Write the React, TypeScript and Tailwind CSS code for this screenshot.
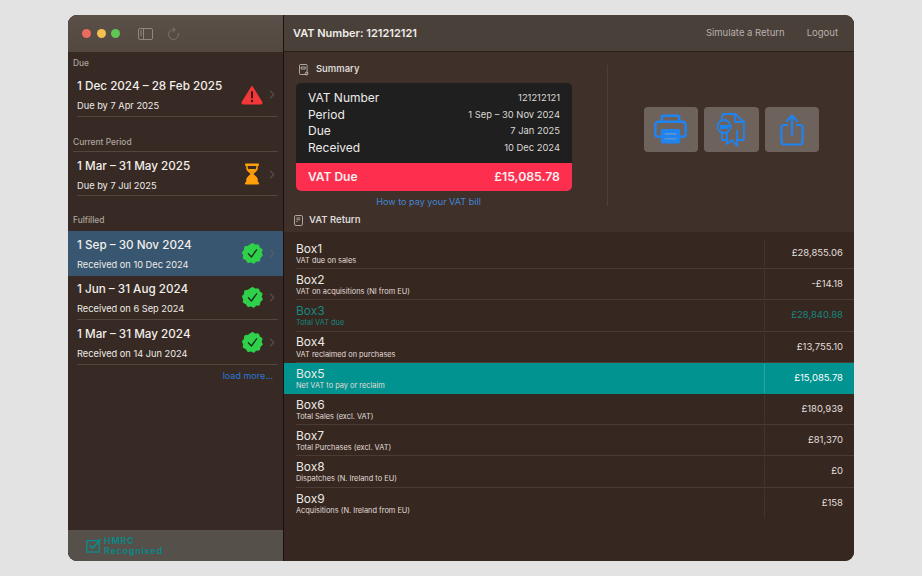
import React from "react";

const font = { fontFamily: 'Inter, "Liberation Sans", sans-serif' };

function Alert() {
  return (
    <svg width="22" height="20" viewBox="0 0 22 20" className="shrink-0">
      <path d="M11 1.2 L21 17.2 Q21.6 19 19.8 19 H2.2 Q0.4 19 1 17.2 Z" fill="#f4383a" stroke="#f4383a" strokeLinejoin="round" />
      <rect x="10" y="6" width="2" height="7.5" rx="1" fill="#3a1512" />
      <circle cx="11" cy="16" r="1.2" fill="#3a1512" />
    </svg>
  );
}

function Hourglass() {
  return (
    <svg width="16" height="22" viewBox="0 0 16 22" className="shrink-0">
      <rect x="1" y="0.5" width="14" height="2.6" rx="1" fill="#ff9f0a" />
      <rect x="1" y="19" width="14" height="2.6" rx="1" fill="#ff9f0a" />
      <path d="M2.2 3 V5.5 Q2.2 7.5 6.6 11 Q2.2 14.5 2.2 16.5 V19 H13.8 V16.5 Q13.8 14.5 9.4 11 Q13.8 7.5 13.8 5.5 V3 H12.2 V5 Q12 6 8 9.4 Q4 6 3.8 5 V3 Z" fill="#ff9f0a" />
      <path d="M3.4 19 Q3.8 15.5 8 12.4 Q12.2 15.5 12.6 19 Z M4.6 6 H11.4 Q10 8 8 9.6 Q6 8 4.6 6 Z" fill="#ff9f0a" />
    </svg>
  );
}

function Badge() {
  return (
    <svg width="21" height="21" viewBox="0 0 21 21" className="shrink-0">
      <path
        d="M10.5 0.3 L13.2 2 L16.4 1.9 L17.6 4.8 L20.2 6.6 L19.2 9.7 L20.4 12.6 L18 14.8 L17.4 18 L14.2 18.2 L11.8 20.4 L9 18.9 L5.8 19.6 L4.2 16.8 L1.2 15.4 L1.6 12.2 L0.2 9.4 L2.4 7 L2.8 3.8 L6 3.2 Z"
        fill="#2fd14a"
        stroke="#2fd14a"
        strokeLinejoin="round"
      />
      <path d="M6.4 10.8 L9.4 14 L14.6 6.8" fill="none" stroke="#1d2b1f" strokeWidth="1.3" strokeLinecap="round" strokeLinejoin="round" />
    </svg>
  );
}

function Chevron() {
  return (
    <svg width="6" height="9" viewBox="0 0 6 9" className="shrink-0">
      <path d="M1.5 1 L4.8 4.5 L1.5 8" fill="none" stroke="#6f655f" strokeWidth="1" strokeLinecap="round" strokeLinejoin="round" />
    </svg>
  );
}

function PeriodRow({
  title,
  sub,
  icon,
  selected,
  tight,
  divider = true,
}: {
  title: string;
  sub: string;
  icon: React.ReactNode;
  selected?: boolean;
  tight?: boolean;
  divider?: boolean;
}) {
  return (
    <div className={`flex flex-col pl-[9px] ${selected ? "bg-[#38566f]" : ""}`}>
      <div className={`flex h-[44.5px] items-center ${divider ? "border-b border-[#52463f]" : ""} ${selected ? "pr-[8px]" : "mr-[5px] pr-[3px]"}`}>
        <div className={`flex min-w-0 flex-1 flex-col ${tight ? "pt-[1px]" : "pt-[3px]"}`}>
          <div className="text-[11.7px] font-medium leading-[16px] text-[#f2efec]">{title}</div>
          <div className="mt-[5px] text-[9.25px] leading-[13px] text-[#efebe7]">{sub}</div>
        </div>
        <div className={`flex w-[22px] justify-center ${tight ? "" : "pt-[2px]"}`}>{icon}</div>
        <div className={`ml-[6px] flex ${tight ? "" : "pt-[2px]"}`}><Chevron /></div>
      </div>
    </div>
  );
}

function SectionLabel({ children, className = "" }: { children: React.ReactNode; className?: string }) {
  return <div className={`pl-[5px] text-[8.4px] font-medium leading-[11px] text-[#ada59f] ${className}`}>{children}</div>;
}

function InfoRow({ k, v }: { k: string; v: string }) {
  return (
    <div className="flex h-[16.6px] items-center justify-between">
      <span className="text-[12px] text-[#eeebe8]">{k}</span>
      <span className="text-[9.4px] text-[#dcd8d5]">{v}</span>
    </div>
  );
}

function BoxRow({
  name,
  desc,
  value,
  state,
  last,
}: {
  name: string;
  desc: string;
  value: string;
  state?: "teal" | "active";
  last?: boolean;
}) {
  const active = state === "active";
  const teal = state === "teal";
  return (
    <div className={`flex h-[31.2px] pl-[12px] ${active ? "bg-[#009390]" : ""}`}>
      <div className={`flex min-w-0 flex-1 pr-[11px] ${!active && !last ? "border-b border-[#483c35]" : ""}`}>
        <div className="flex flex-1 flex-col justify-center pt-[0.5px]">
          <div className={`text-[12px] leading-[15px] ${teal ? "text-[#14877f]" : "text-[#ece8e5]"}`}>{name}</div>
          <div className={`mt-[0.5px] text-[7.4px] leading-[10px] ${teal ? "text-[#14877f]" : "text-[#e2ddd9]"}`}>{desc}</div>
        </div>
        <div className={`my-[1px] flex w-[79px] items-center justify-end border-l ${active ? "border-[#2aa5a2]" : "border-[#41352e]"}`}>
          <span className={`text-[9.5px] ${teal ? "text-[#14877f]" : active ? "text-white" : "text-[#e3dfdb]"}`}>{value}</span>
        </div>
      </div>
    </div>
  );
}

function ActionButton({ children }: { children: React.ReactNode }) {
  return <div className="flex h-[45px] w-[54.5px] items-center justify-center rounded-[4px] bg-[#6e625c]">{children}</div>;
}

export default function App() {
  return (
    <div className="min-h-[576px] bg-[#e3e3e3] pl-[68px] pt-[15px]" style={font}>
      <div className="flex h-[546px] w-[786px] overflow-hidden rounded-[9px] bg-[#362821]">
        {/* Sidebar */}
        <aside className="flex w-[215px] shrink-0 flex-col bg-[#372a24]">
          <div className="flex h-[37px] shrink-0 items-center bg-gradient-to-b from-[#5a5049] to-[#524840] pl-[14px]">
            <span className="h-[9px] w-[9px] rounded-full bg-[#ed6a5e]" />
            <span className="ml-[5.5px] h-[9px] w-[9px] rounded-full bg-[#f4bf4f]" />
            <span className="ml-[5.5px] h-[9px] w-[9px] rounded-full bg-[#61c554]" />
            <svg width="15" height="12" viewBox="0 0 15 12" className="ml-[18px]" fill="none" stroke="#8f8882">
              <rect x="0.5" y="0.5" width="14" height="11" rx="1.5" />
              <path d="M5.5 0.5 V11.5" />
              <path d="M2 3 H4 M2 5 H4 M2 7 H4" />
            </svg>
            <svg width="13" height="14" viewBox="0 0 13 14" className="ml-[14px]" fill="none" stroke="#7a726c" strokeLinecap="round" strokeLinejoin="round">
              <path d="M7.6 2.6 A5 5 0 1 0 11.4 6.4" />
              <path d="M6 0.6 L8.2 2.6 L6.4 4.8" />
            </svg>
          </div>
          <div className="flex min-h-0 flex-1 flex-col">
            <SectionLabel className="mt-[6px]">Due</SectionLabel>
            <div className="mt-[3px]">
              <PeriodRow title="1 Dec 2024 – 28 Feb 2025" sub="Due by 7 Apr 2025" icon={<Alert />} />
            </div>
            <SectionLabel className="mt-[20px]">Current Period</SectionLabel>
            <div className="mx-[5px] mt-[3px] border-t border-[#52463f]" />
            <PeriodRow title="1 Mar – 31 May 2025" sub="Due by 7 Jul 2025" icon={<Hourglass />} />
            <SectionLabel className="mt-[19px]">Fulfilled</SectionLabel>
            <div className="mt-[5px]">
              <PeriodRow title="1 Sep – 30 Nov 2024" sub="Received on 10 Dec 2024" icon={<Badge />} selected tight divider={false} />
              <PeriodRow title="1 Jun – 31 Aug 2024" sub="Received on 6 Sep 2024" icon={<Badge />} tight />
              <PeriodRow title="1 Mar – 31 May 2024" sub="Received on 14 Jun 2024" icon={<Badge />} />
            </div>
            <div className="mt-[5.5px] pr-[10px] text-right text-[9px] leading-[11px] text-[#2a78d8]">load more...</div>
          </div>
          <div className="flex h-[31px] shrink-0 items-center bg-[#56504a] pl-[18px]">
            <svg width="16" height="15" viewBox="0 0 16 15" fill="none" stroke="#0e8a88">
              <rect x="0.8" y="2.6" width="12.4" height="11.4" strokeWidth="1.4" />
              <path d="M3.4 7.2 L6.6 10.4 L14.4 1" strokeWidth="1.8" />
            </svg>
            <div className="ml-[2px] text-[9px] font-bold leading-[10px] tracking-[0.7px] text-[#0e8585]">
              <div>HMRC</div>
              <div>Recognised</div>
            </div>
          </div>
        </aside>
        <div className="w-px shrink-0 bg-[#191210]" />
        {/* Main */}
        <main className="flex min-w-0 flex-1 flex-col">
          <header className="flex h-[37px] shrink-0 items-center justify-between border-b border-[#2a201b] bg-[#4a403a] pl-[9px] pr-[16px] pt-[1px]">
            <div className="text-[11px] font-semibold text-[#f0ede9]">VAT Number: 121212121</div>
            <div className="flex gap-[22px] text-[9.5px] text-[#b8b1ab]">
              <span>Simulate a Return</span>
              <span>Logout</span>
            </div>
          </header>
          <section className="flex h-[180px] shrink-0 flex-col bg-[#3f302a]">
            <div className="flex min-h-0 flex-1">
              <div className="w-[323px] shrink-0 pl-[12px]">
                <div className="flex h-[31px] items-center pl-[3px] pt-[4px]">
                  <svg width="10" height="12" viewBox="0 0 10 12" fill="none" stroke="#c9c4bf" strokeWidth="0.8">
                    <rect x="0.5" y="0.5" width="7.6" height="10" rx="1" />
                    <path d="M2.2 3 H6.2 V5 H2.2 Z" />
                    <circle cx="7.6" cy="9.6" r="1.4" />
                  </svg>
                  <span className="ml-[7px] text-[9.4px] font-semibold text-[#dcd8d4]">Summary</span>
                </div>
                <div className="w-[276px] overflow-hidden rounded-[5px] bg-[#1f1f1f]">
                  <div className="px-[12px] pb-[6.6px] pt-[7px]">
                    <InfoRow k="VAT Number" v="121212121" />
                    <InfoRow k="Period" v="1 Sep – 30 Nov 2024" />
                    <InfoRow k="Due" v="7 Jan 2025" />
                    <InfoRow k="Received" v="10 Dec 2024" />
                  </div>
                  <div className="flex h-[28px] items-center justify-between bg-[#fe2e4f] px-[12px] font-semibold text-[#f7f0ee]">
                    <span className="text-[12px]">VAT Due</span>
                    <span className="text-[12.3px]">£15,085.78</span>
                  </div>
                </div>
                <div className="mt-[4px] w-[265px] text-center text-[9.1px] text-[#4387d4]">How to pay your VAT bill</div>
              </div>
              <div className="mt-[13px] w-px bg-[#4d403a]" />
              <div className="flex flex-1 items-start pl-[35.5px] pt-[55px]">
                <div className="flex gap-[6px]">
                  <ActionButton>
                    <svg width="33" height="31" viewBox="0 0 34 31" fill="none" stroke="#1f83f0" strokeWidth="2.6">
                      <path d="M8 8 V3.4 Q8 1.4 10 1.4 H24 Q26 1.4 26 3.4 V8" />
                      <path d="M7 23 H4 Q1.4 23 1.4 20.4 V11 Q1.4 7.4 5 7.4 H29 Q32.6 7.4 32.6 11 V20.4 Q32.6 23 30 23 H27" />
                      <rect x="7" y="15" width="20" height="15" rx="1.5" fill="#1f83f0" stroke="none" />
                      <path d="M11 20 H23 M11 25 H23" stroke="#5d93cf" strokeWidth="1.6" />
                    </svg>
                  </ActionButton>
                  <ActionButton>
                    <svg width="30" height="34" viewBox="0 0 30 34" fill="none" stroke="#1f83f0" strokeWidth="1.8" strokeLinejoin="round">
                      <path d="M6 8 V3 Q6 1 8 1 H19 L28 9 V26 Q28 27 26 27 H21" />
                      <path d="M19 1 V9 H28" />
                      <path d="M6 18 V27 H12" />
                      <circle cx="8" cy="13.5" r="6.5" />
                      <path d="M4 13 H16 M4 15 H12" />
                      <path d="M11 19 V31 L16 27 L21 33 V17" />
                    </svg>
                  </ActionButton>
                  <ActionButton>
                    <svg width="24" height="32" viewBox="0 0 24 32" fill="none" stroke="#1f83f0" strokeWidth="2.2" strokeLinecap="round" strokeLinejoin="round">
                      <path d="M7 11 H4 Q1.5 11 1.5 13.5 V28 Q1.5 30.5 4 30.5 H20 Q22.5 30.5 22.5 28 V13.5 Q22.5 11 20 11 H17" />
                      <path d="M12 21 V2" />
                      <path d="M7 7 L12 1.5 L17 7" />
                    </svg>
                  </ActionButton>
                </div>
              </div>
            </div>
            <div className="flex h-[26px] shrink-0 items-center pl-[10px] pt-[2px]">
              <svg width="9" height="11" viewBox="0 0 9 11" fill="none" stroke="#c9c4bf" strokeWidth="0.8">
                <rect x="0.5" y="0.5" width="8" height="10" rx="1.4" />
                <path d="M2.4 3 H6.2 M2.4 4.8 H6.2 M2.4 6.6 H3.6" />
              </svg>
              <span className="ml-[6px] text-[9.5px] font-semibold text-[#dcd8d4]">VAT Return</span>
            </div>
          </section>
          <section className="flex-1 bg-[#362821] pt-[6px]">
            <BoxRow name="Box1" desc="VAT due on sales" value="£28,855.06" />
            <BoxRow name="Box2" desc="VAT on acquisitions (NI from EU)" value="-£14.18" />
            <BoxRow name="Box3" desc="Total VAT due" value="£28,840.88" state="teal" />
            <BoxRow name="Box4" desc="VAT reclaimed on purchases" value="£13,755.10" />
            <BoxRow name="Box5" desc="Net VAT to pay or reclaim" value="£15,085.78" state="active" />
            <BoxRow name="Box6" desc="Total Sales (excl. VAT)" value="£180,939" />
            <BoxRow name="Box7" desc="Total Purchases (excl. VAT)" value="£81,370" />
            <BoxRow name="Box8" desc="Dispatches (N. Ireland to EU)" value="£0" />
            <BoxRow name="Box9" desc="Acquisitions (N. Ireland from EU)" value="£158" last />
          </section>
        </main>
      </div>
    </div>
  );
}
